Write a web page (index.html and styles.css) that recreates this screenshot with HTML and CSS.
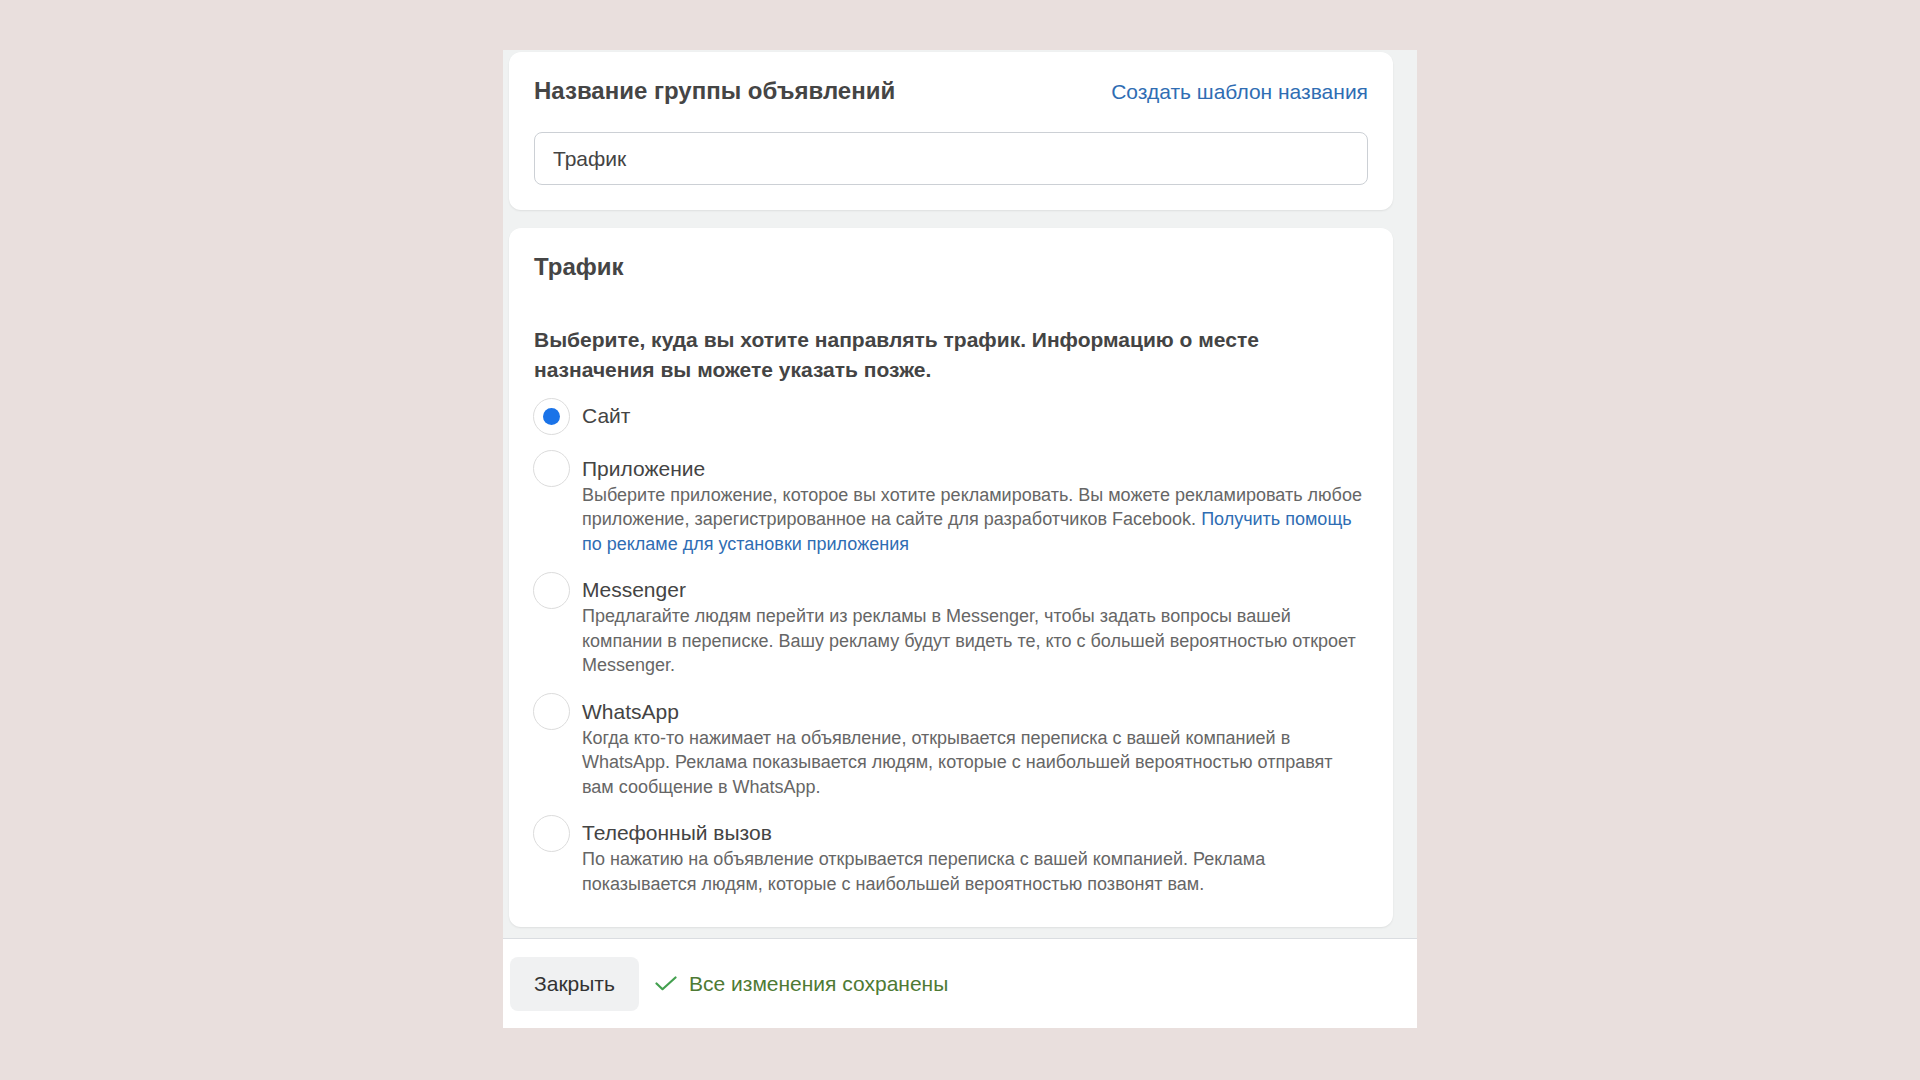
FILE: index.html
```html
<!DOCTYPE html>
<html lang="ru">
<head>
<meta charset="utf-8">
<title>Группа объявлений</title>
<link rel="stylesheet" href="styles.css">
</head>
<body>
<div class="panel">
  <div class="panel-body">
    <!-- название группы -->
    <div class="card">
      <div class="card-head">
        <span class="card-title">Название группы объявлений</span>
        <a class="link" href="#">Создать шаблон названия</a>
      </div>
      <input type="text" class="name-input" value="Трафик">
    </div>

    <!-- трафик -->
    <div class="card">
      <div class="card-title">Трафик</div>
      <div class="question">Выберите, куда вы хотите направлять трафик. Информацию о месте назначения вы можете указать позже.</div>
      <ul class="options">
        <li class="option">
          <span class="radio checked"></span>
          <div class="option-text">
            <div class="option-label">Сайт</div>
          </div>
        </li>
        <li class="option">
          <span class="radio"></span>
          <div class="option-text">
            <div class="option-label">Приложение</div>
            <div class="option-desc">Выберите приложение, которое вы хотите рекламировать. Вы можете рекламировать любое приложение, зарегистрированное на сайте для разработчиков Facebook. <a class="link" href="#">Получить помощь по рекламе для установки приложения</a></div>
          </div>
        </li>
        <li class="option">
          <span class="radio"></span>
          <div class="option-text">
            <div class="option-label">Messenger</div>
            <div class="option-desc">Предлагайте людям перейти из рекламы в Messenger, чтобы задать вопросы вашей компании в переписке. Вашу рекламу будут видеть те, кто с большей вероятностью откроет Messenger.</div>
          </div>
        </li>
        <li class="option">
          <span class="radio"></span>
          <div class="option-text">
            <div class="option-label">WhatsApp</div>
            <div class="option-desc">Когда кто-то нажимает на объявление, открывается переписка с вашей компанией в WhatsApp. Реклама показывается людям, которые с наибольшей вероятностью отправят вам сообщение в WhatsApp.</div>
          </div>
        </li>
        <li class="option">
          <span class="radio"></span>
          <div class="option-text">
            <div class="option-label">Телефонный вызов</div>
            <div class="option-desc">По нажатию на объявление открывается переписка с вашей компанией. Реклама показывается людям, которые с наибольшей вероятностью позвонят вам.</div>
          </div>
        </li>
      </ul>
    </div>
  </div>

  <div class="footer">
    <button class="btn-close" type="button">Закрыть</button>
    <span class="saved">
      <svg width="22" height="15" viewBox="0 0 22 15"><path d="M1.5 7.5 L7.5 13.2 L20.5 1.5" fill="none" stroke="#43a04f" stroke-width="2.2" stroke-linecap="round" stroke-linejoin="round"/></svg>
      Все изменения сохранены
    </span>
  </div>
</div>
</body>
</html>
```

FILE: styles.css
```css
body{
margin:0;
background-color:#e9dfdd;
font-family:"Liberation Sans", Arial, sans-serif;
color:#444;
}
.panel{
width:914px;
margin:50px auto 0;
background-color:#f0f2f2;
}
.panel-body{
padding:2px 24px 11px 6px;
display:flex;
flex-direction:column;
gap:18px;
}
.card{
background-color:#fff;
border-radius:12px;
padding:24px 25px 25px 25px;
box-shadow:0 1px 2px rgba(0,0,0,0.08);
}
.card-head{
display:flex;
justify-content:space-between;
align-items:baseline;
}
.card-title{
font-size:24px;
line-height:30px;
font-weight:bold;
color:#454545;
}
.link{
color:#2f6db3;
text-decoration:none;
}
.card-head .link{
font-size:21px;
line-height:30px;
}
.name-input{
display:block;
box-sizing:border-box;
width:100%;
height:53px;
margin-top:25px;
padding:0 18px;
border:1px solid #ccd0d5;
border-radius:8px;
font-family:inherit;
font-size:21px;
color:#444;
outline:none;
}
.question{
margin-top:43px;
font-size:21px;
line-height:30px;
font-weight:bold;
color:#444;
}
.options{
list-style:none;
margin:17px 0 6px;
padding:0;
display:flex;
flex-direction:column;
gap:20px;
}
.option{
display:flex;
align-items:flex-start;
gap:12px;
}
.radio{
flex:none;
box-sizing:border-box;
width:37px;
height:37px;
margin:-4.5px 0 0 -1px;
border:1.5px solid #dcdcdc;
border-radius:50%;
background-color:#fff;
display:flex;
align-items:center;
justify-content:center;
}
.radio.checked::after{
content:"";
width:17px;
height:17px;
border-radius:50%;
background-color:#1a73e8;
}
.option-label{
font-size:21px;
line-height:28px;
color:#444;
}
.option-desc{
font-size:18px;
line-height:24.5px;
color:#666;
}
.footer{
background-color:#fff;
border-top:1px solid #dadde1;
height:89px;
padding-left:7px;
display:flex;
align-items:center;
gap:16px;
}
.btn-close{
width:129px;
height:54px;
border:none;
border-radius:8px;
background-color:#f0f1f2;
font-family:inherit;
font-size:21px;
color:#333;
}
.saved{
display:flex;
align-items:center;
gap:12px;
font-size:21px;
color:#4e7a34;
}
```
